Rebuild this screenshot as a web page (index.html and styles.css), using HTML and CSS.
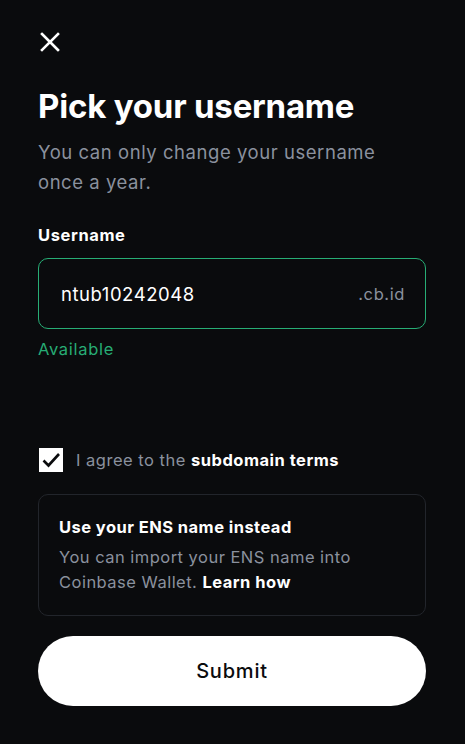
FILE: index.html
```html
<!DOCTYPE html>
<html>
<head>
<meta charset="utf-8">
<link rel="stylesheet" href="styles.css">
</head>
<body>
<div class="page">
  <button class="close" aria-label="Close">
    <svg width="20" height="20" viewBox="0 0 20 20"><path d="M2 2 L18 18 M18 2 L2 18" stroke="#fff" stroke-width="2.6" stroke-linecap="square"/></svg>
  </button>
  <h1 class="title">Pick your username</h1>
  <p class="subtitle">You can only change your username once a year.</p>
  <label class="label">Username</label>
  <div class="input">
    <span class="value">ntub10242048</span>
    <span class="suffix">.cb.id</span>
  </div>
  <div class="status">Available</div>
  <div class="agree">
    <span class="check">
      <svg width="24" height="24" viewBox="0 0 24 24"><path d="M4.5 12.5 L9.5 17.5 L20 6" fill="none" stroke="#0a0b0d" stroke-width="2.6"/></svg>
    </span>
    <span class="agree-text">I agree to the <b>subdomain terms</b></span>
  </div>
  <div class="card">
    <div class="card-title">Use your ENS name instead</div>
    <div class="card-body">You can import your ENS name into Coinbase Wallet. <b>Learn how</b></div>
  </div>
  <button class="submit">Submit</button>
</div>
</body>
</html>
```
FILE: styles.css
```css
html, body {
  margin: 0;
  padding: 0;
  background: #0a0b0d;
}
body {
  font-family: Inter, "Noto Sans", sans-serif;
  color: #fff;
}
.page {
  padding: 30px 39px 0 38px;
  display: flex;
  flex-direction: column;
}
.close {
  background: none;
  border: 0;
  padding: 0;
  margin: 2px 0 0 2px;
  width: 20px;
  height: 20px;
  display: flex;
}
.title {
  margin: 34px 0 0 0;
  font-size: 33px;
  line-height: 40px;
  font-weight: 700;
  letter-spacing: -0.2px;
}
.subtitle {
  margin: 11px 0 0 0;
  font-size: 18.5px;
  line-height: 30px;
  letter-spacing: 0.55px;
  color: #8a919e;
  width: 350px;
}
.label {
  margin-top: 26px;
  font-size: 16.5px;
  line-height: 24px;
  font-weight: 700;
  letter-spacing: 0.6px;
}
.input {
  margin-top: 11px;
  height: 69px;
  border: 1px solid #27ad75;
  border-radius: 10px;
  display: flex;
  align-items: center;
  justify-content: space-between;
  padding: 0 20px 0 22px;
}
.value {
  font-size: 18.5px;
  letter-spacing: 0.55px;
}
.suffix {
  font-size: 16.5px;
  letter-spacing: 0.6px;
  color: #8a919e;
}
.status {
  margin-top: 8px;
  font-size: 16.5px;
  line-height: 24px;
  letter-spacing: 0.7px;
  color: #27ad75;
}
.agree {
  margin-top: 87px;
  display: flex;
  align-items: center;
  gap: 13px;
  margin-left: 1px;
}
.check {
  width: 24px;
  height: 24px;
  background: #fff;
  display: flex;
}
.agree-text {
  font-size: 16.5px;
  letter-spacing: 0.5px;
  color: #8a919e;
}
.agree-text b, .card-body b {
  color: #fff;
  font-weight: 700;
}
.card {
  margin-top: 22px;
  border: 1px solid #22252b;
  border-radius: 10px;
  padding: 20px 20px 20px 20px;
}
.card-title {
  font-size: 16.5px;
  line-height: 24px;
  font-weight: 700;
  letter-spacing: 0.45px;
}
.card-body {
  margin-top: 6px;
  font-size: 16.5px;
  line-height: 25px;
  letter-spacing: 0.48px;
  color: #8a919e;
  width: 320px;
}
.submit {
  margin-top: 20px;
  height: 70px;
  border: 0;
  border-radius: 35px;
  background: #fff;
  color: #0a0b0d;
  font-family: Inter, "Noto Sans", sans-serif;
  font-size: 20px;
  font-weight: 500;
  letter-spacing: 0.8px;
}
```
